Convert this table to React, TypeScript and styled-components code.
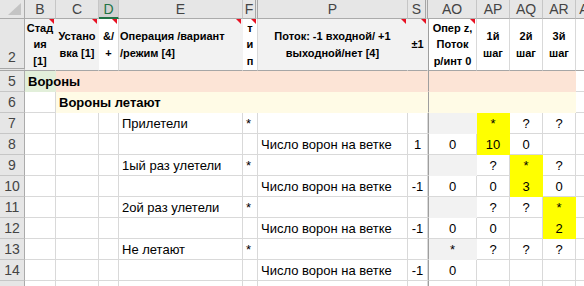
import React from 'react';
import styled, { createGlobalStyle } from 'styled-components';

type Align = 'left' | 'center' | 'right';

interface ICell {
	t?: string;
	bg?: string;
	bold?: boolean;
	align?: Align;
	spill?: boolean;
	note?: boolean;
}

interface IRow {
	n: number;
	head?: boolean;
	cells: Record<string, ICell>;
}

const LINE = '#d9d9d9';
const HEAD_BG = '#e6e6e6';
const PEACH = '#fce4d6';
const GREEN = '#e2efda';
const CREAM = '#fffbe6';
const GRAY = '#f2f2f2';
const YELLOW = '#ffff00';

const COLS = [
	{ key: 'B', w: 31 },
	{ key: 'C', w: 43 },
	{ key: 'D', w: 20, active: true },
	{ key: 'E', w: 124 },
	{ key: 'F', w: 15, double: true },
	{ key: 'P', w: 150 },
	{ key: 'S', w: 20, double: true },
	{ key: 'AO', w: 49, frozen: true },
	{ key: 'AP', w: 33 },
	{ key: 'AQ', w: 33 },
	{ key: 'AR', w: 33 },
	{ key: 'AS', w: 26 },
];

const FILLED = ['B', 'C', 'D', 'E', 'F', 'P', 'S', 'AO', 'AP', 'AQ', 'AR'];

const band = (bg: string, from: number) =>
	Object.fromEntries(FILLED.slice(from).map((k) => [k, { bg }]));

const crow = 'Число ворон на ветке';

const ROWS: IRow[] = [
	{
		n: 2,
		head: true,
		cells: {
			B: { t: 'Стад\nия\n[1]', bg: GRAY, note: true },
			C: { t: 'Устано\nвка [1]', bg: GRAY, note: true },
			D: { t: '&/\n+', note: true },
			E: { t: 'Операция /вариант\n/режим [4]', bg: GRAY, align: 'left', note: true },
			F: { t: 'т\nи\nп', note: true },
			P: { t: 'Поток: -1 входной/ +1\nвыходной/нет [4]', bg: GRAY, note: true },
			S: { t: '±1', bg: GRAY, note: true },
			AO: { t: 'Опер z,\nПоток\nр/инт 0', note: true },
			AP: { t: '1й\nшаг' },
			AQ: { t: '2й\nшаг' },
			AR: { t: '3й\nшаг' },
		},
	},
	{
		n: 5,
		cells: { ...band(PEACH, 1), B: { t: 'Вороны', bg: GREEN, bold: true, spill: true, align: 'left' } },
	},
	{
		n: 6,
		cells: { ...band(CREAM, 1), C: { t: 'Вороны летают', bg: CREAM, bold: true, spill: true, align: 'left' } },
	},
	{
		n: 7,
		cells: {
			E: { t: 'Прилетели', align: 'left' },
			F: { t: '*', align: 'left' },
			AO: { bg: GRAY },
			AP: { t: '*', bg: YELLOW },
			AQ: { t: '?' },
			AR: { t: '?' },
		},
	},
	{
		n: 8,
		cells: { P: { t: crow, align: 'left' }, S: { t: '1' }, AO: { t: '0' }, AP: { t: '10', bg: YELLOW }, AQ: { t: '0' } },
	},
	{
		n: 9,
		cells: {
			E: { t: '1ый раз улетели', align: 'left' },
			F: { t: '*', align: 'left' },
			AO: { bg: GRAY },
			AP: { t: '?' },
			AQ: { t: '*', bg: YELLOW },
			AR: { t: '?' },
		},
	},
	{
		n: 10,
		cells: { P: { t: crow, align: 'left' }, S: { t: '-1' }, AO: { t: '0' }, AP: { t: '0' }, AQ: { t: '3', bg: YELLOW }, AR: { t: '0' } },
	},
	{
		n: 11,
		cells: {
			E: { t: '2ой раз улетели', align: 'left' },
			F: { t: '*', align: 'left' },
			AO: { bg: GRAY },
			AP: { t: '?' },
			AQ: { t: '?' },
			AR: { t: '*', bg: YELLOW },
		},
	},
	{
		n: 12,
		cells: { P: { t: crow, align: 'left' }, S: { t: '-1' }, AO: { t: '0' }, AP: { t: '0' }, AR: { t: '2', bg: YELLOW } },
	},
	{
		n: 13,
		cells: {
			E: { t: 'Не летают', align: 'left' },
			F: { t: '*', align: 'left' },
			AO: { t: '*', bg: GRAY },
			AP: { t: '?' },
			AQ: { t: '?' },
			AR: { t: '?' },
		},
	},
	{
		n: 14,
		cells: { P: { t: crow, align: 'left' }, S: { t: '-1' }, AO: { t: '0' } },
	},
	{ n: 15, cells: {} },
];

const GlobalStyle = createGlobalStyle`
	html, body {
		margin: 0;
		padding: 0;
		background: #fff;
		overflow: hidden;
	}
	body {
		font-family: 'Liberation Sans', Arial, sans-serif;
		color: #000;
	}
`;

const Sheet = styled.div<{ $cols: string }>`
	display: grid;
	grid-template-columns: 25px ${(p) => p.$cols};
	grid-template-rows: 19px 52px repeat(11, 21px);
	width: 584px;
	height: 286px;
	overflow: hidden;
`;

const Corner = styled.div`
	position: relative;
	background: ${HEAD_BG};
	border-right: 1px solid #ababab;
	border-bottom: 1px solid #ababab;

	&::after {
		content: '';
		position: absolute;
		right: 3px;
		bottom: 3px;
		border-left: 13px solid transparent;
		border-bottom: 12px solid #c4c4c4;
	}
`;

const ColHead = styled.div<{ $active?: boolean; $double?: boolean }>`
	display: flex;
	align-items: center;
	justify-content: center;
	overflow: hidden;
	white-space: nowrap;
	background: ${(p) => (p.$active ? '#d2d2d2' : HEAD_BG)};
	color: ${(p) => (p.$active ? '#217346' : '#444')};
	font-size: 14px;
	border-right: ${(p) => (p.$double ? '3px double #a6a6a6' : '1px solid #c6c6c6')};
	border-bottom: ${(p) => (p.$active ? '2px solid #217346' : '1px solid #ababab')};
`;

const RowHead = styled.div<{ $tall?: boolean }>`
	display: flex;
	align-items: ${(p) => (p.$tall ? 'flex-end' : 'center')};
	justify-content: center;
	padding-bottom: ${(p) => (p.$tall ? '3px' : '0')};
	background: ${HEAD_BG};
	color: #444;
	font-size: 14px;
	border-right: 1px solid #ababab;
	border-bottom: ${(p) => (p.$tall ? '3px double #a6a6a6' : '1px solid #c6c6c6')};
`;

const Cell = styled.div<{
	$bg?: string;
	$bold?: boolean;
	$align?: Align;
	$spill?: boolean;
	$note?: boolean;
	$head?: boolean;
	$frozen?: boolean;
}>`
	position: relative;
	z-index: ${(p) => (p.$spill ? 1 : 'auto')};
	display: flex;
	align-items: center;
	justify-content: ${(p) => (p.$align === 'left' ? 'flex-start' : p.$align === 'right' ? 'flex-end' : 'center')};
	padding: ${(p) => (p.$head ? '0 1px' : '1px 3px 0')};
	overflow: ${(p) => (p.$spill ? 'visible' : 'hidden')};
	white-space: ${(p) => (p.$head ? 'pre-line' : 'nowrap')};
	text-align: ${(p) => (p.$align === 'left' ? 'left' : 'center')};
	background: ${(p) => p.$bg ?? '#fff'};
	font-size: ${(p) => (p.$head ? '11px' : '13px')};
	line-height: ${(p) => (p.$head ? '16.5px' : '16px')};
	font-weight: ${(p) => (p.$bold || p.$head ? 700 : 400)};
	border-left: ${(p) => (p.$frozen ? '1px solid #9e9e9e' : 'none')};
	border-right: 1px solid ${(p) => p.$bg ?? LINE};
	border-bottom: 1px solid ${(p) => (p.$head ? '#a6a6a6' : p.$bg ?? LINE)};

	&::after {
		content: '';
		display: ${(p) => (p.$note ? 'block' : 'none')};
		position: absolute;
		top: 0;
		right: 1px;
		border-left: 5px solid transparent;
		border-top: 5px solid #e81123;
	}
`;

export default function App() {
	const template = COLS.map((c) => `${c.w}px`).join(' ');

	return (
		<>
			<GlobalStyle />
			<Sheet $cols={template}>
				<Corner />
				{COLS.map((c) => (
					<ColHead key={c.key} $active={c.active} $double={c.double}>
						{c.key}
					</ColHead>
				))}
				{ROWS.map((row) => (
					<React.Fragment key={row.n}>
						<RowHead $tall={row.head}>{row.n}</RowHead>
						{COLS.map((c) => {
							const cell = row.cells[c.key] ?? {};
							return (
								<Cell
									key={c.key}
									$bg={cell.bg}
									$bold={cell.bold}
									$align={cell.align}
									$spill={cell.spill}
									$note={cell.note}
									$head={row.head}
									$frozen={c.frozen}
								>
									{cell.t}
								</Cell>
							);
						})}
					</React.Fragment>
				))}
			</Sheet>
		</>
	);
}
